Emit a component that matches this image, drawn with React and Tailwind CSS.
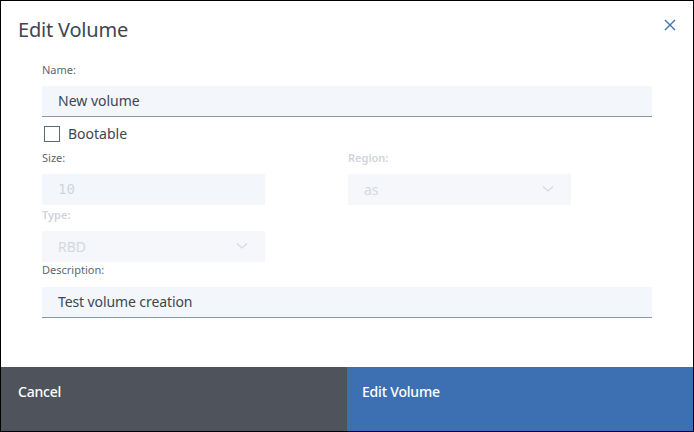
import React from "react";

const font = { fontFamily: '"Noto Sans", "Open Sans", sans-serif' };

function Chevron({ className }) {
  return (
    <svg width="12" height="8" viewBox="0 0 12 8" className={className}>
      <path d="M1 1.5 L6 6 L11 1.5" fill="none" stroke="currentColor" strokeWidth="1.2" />
    </svg>
  );
}

export default function App() {
  return (
    <div
      className="w-[694px] h-[432px] border border-black bg-white flex flex-col box-border overflow-hidden"
      style={font}
    >
      <div className="flex justify-between items-start pl-[17px] pr-[17px] pt-[17px]">
        <div className="text-[20px] leading-[24px] text-[#3d4651] tracking-[-0.2px]">Edit Volume</div>
        <button className="mt-[1px] text-[#3d70b2]">
          <svg width="12" height="12" viewBox="0 0 12 12">
            <path d="M1 1 L11 11 M11 1 L1 11" stroke="currentColor" strokeWidth="1.4" fill="none" />
          </svg>
        </button>
      </div>

      <div className="pl-[41px] w-[651px] flex flex-col">
        <div className="mt-[20px] text-[11px] leading-[16px] text-[#5a6872]">Name:</div>
        <div className="mt-[8px] h-[31px] bg-[#f3f6fa] border-b border-[#8897a2] flex items-center pl-[16px] pb-[1px] text-[14px] text-[#3d4651]">
          New volume
        </div>
        <div className="mt-[9px] flex items-center h-[16px]">
          <div className="ml-[2px] w-[16px] h-[16px] border border-[#5a6872] bg-white"></div>
          <span className="ml-[8px] text-[14px] text-[#3d4651] pb-[1px]">Bootable</span>
        </div>

        <div className="mt-[8px] flex">
          <div className="w-[223px] flex flex-col">
            <div className="text-[11px] leading-[16px] text-[#5a6872]">Size:</div>
            <div
              className="mt-[8px] h-[31px] bg-[#f3f6fa] flex items-center pl-[16px] pb-[1px] text-[14px] text-[#d0d6dc]"
              style={{ fontFamily: '"DejaVu Sans Mono", monospace' }}
            >
              10
            </div>
          </div>
          <div className="ml-[83px] w-[223px] flex flex-col">
            <div className="text-[11px] leading-[16px] text-[#cfd5db] font-semibold">Region:</div>
            <div className="mt-[8px] h-[31px] bg-[#f5f7fb] flex items-center justify-between pl-[16px] pr-[17px] pb-[1px] text-[14px] text-[#d3d9df]">
              <span>as</span>
              <Chevron className="text-[#d3d9df]" />
            </div>
          </div>
        </div>

        <div className="mt-[2px] w-[223px] flex flex-col">
          <div className="text-[11px] leading-[16px] text-[#cfd5db] font-semibold">Type:</div>
          <div className="mt-[8px] h-[31px] bg-[#f5f7fb] flex items-center justify-between pl-[16px] pr-[17px] pb-[1px] text-[14px] text-[#d3d9df]">
            <span>RBD</span>
            <Chevron className="text-[#d3d9df]" />
          </div>
        </div>

        <div className="mt-[0px] text-[11px] leading-[16px] text-[#5a6872]">Description:</div>
        <div className="mt-[9px] h-[31px] bg-[#f3f6fa] border-b border-[#8897a2] flex items-center pl-[16px] pb-[1px] text-[14px] text-[#3d4651] tracking-[-0.1px]">
          Test volume creation
        </div>
      </div>

      <div className="mt-auto h-[64px] flex">
        <button className="w-[346px] h-full bg-[#4f535b] text-white text-[14px] font-medium text-left pl-[17px] pb-[16px] tracking-[-0.2px]">
          Cancel
        </button>
        <button className="flex-1 h-full bg-[#3d70b2] text-white text-[14px] font-medium text-left pl-[15px] pb-[16px] tracking-[-0.2px]">
          Edit Volume
        </button>
      </div>
    </div>
  );
}
